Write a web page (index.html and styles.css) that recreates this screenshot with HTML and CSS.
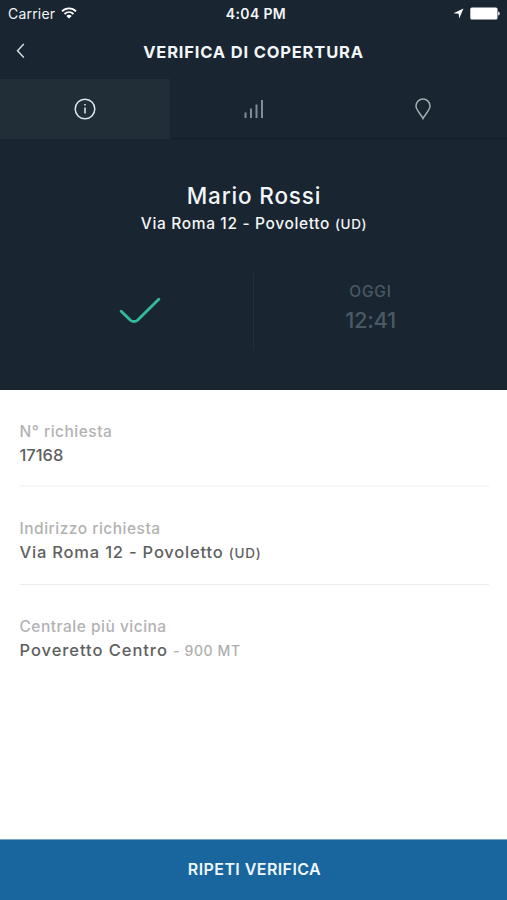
FILE: index.html
```html
<!DOCTYPE html>
<html lang="it">
<head>
<meta charset="utf-8">
<title>Verifica di copertura</title>
<link rel="stylesheet" href="styles.css">
</head>
<body>
<div class="app">
  <div class="status">
    <div class="carrier"><span>Carrier</span>
      <svg width="16" height="12" viewBox="0 0 16 12" fill="none" stroke="#fff" stroke-width="1.8"><path d="M1 4.4C5 .4 11 .4 15 4.4M3.5 7c2.6-2.5 6.4-2.5 9 0"/><path d="M8 11.6 5.3 8.9c1.6-1.4 3.8-1.4 5.4 0z" fill="#fff" stroke="none"/></svg>
    </div>
    <div class="clock">4:04 PM</div>
    <div class="power">
      <svg width="11" height="11" viewBox="0 0 11 11" fill="#fff"><path d="M10.5.5 6.2 10.5 5.7 5.7.5 5.2z"/></svg>
      <svg width="31" height="13" viewBox="0 0 31 13" fill="#fff"><rect x=".3" y=".5" width="27.2" height="12" rx="1.6"/><path d="M28.2 4.4c2 .6 2 3.6 0 4.2z"/></svg>
    </div>
  </div>
  <header class="header">
    <svg class="back" width="9" height="16" viewBox="0 0 9 16" fill="none" stroke="#dce3e8" stroke-width="1.4"><path d="M7.8 1 1.5 7.8l6.3 6.7"/></svg>
    <h1>VERIFICA DI COPERTURA</h1>
  </header>
  <nav class="tabs">
    <div class="tab active"><svg width="22" height="22" viewBox="0 0 22 22" fill="none" stroke="#dfe7ea" stroke-width="1.5"><circle cx="11" cy="11" r="9.8"/><path d="M11 9.5v6M11 6v1.6"/></svg></div>
    <div class="tab"><svg width="22" height="22" viewBox="0 0 22 22" fill="none" stroke="#838c94" stroke-width="2"><path d="M2.5 14.500v5.500M8 10.500V20M13.500 6.500V20M19 2v18"/></svg></div>
    <div class="tab"><svg width="16" height="22" viewBox="0 0 16 22" fill="none" stroke="#a4abb1" stroke-width="1.5"><path d="M8 20.400C6.500 17 1 12.200 1 8a7 6.900 0 0 1 14 0c0 4.200-5.500 9-7 12.400z"/></svg></div>
  </nav>
  <section class="hero">
    <div class="name">Mario Rossi</div>
    <div class="address">Via Roma 12 - Povoletto <small>(UD)</small></div>
    <div class="result">
      <div class="outcome"><svg width="42" height="28" viewBox="0 0 42 28" fill="none" stroke="#34b99b" stroke-width="2.900" stroke-linecap="round"><path d="m2.200 14.200 9 8.800q3.800 3.200 7.600 0L39.800 2.200"/></svg></div>
      <div class="when"><div class="day">OGGI</div><div class="time">12:41</div></div>
    </div>
  </section>
  <main class="details">
    <div class="row"><div class="label">N° richiesta</div><div class="value number">17168</div></div>
    <div class="row"><div class="label">Indirizzo richiesta</div><div class="value street">Via Roma 12 - Povoletto <small>(UD)</small></div></div>
    <div class="row"><div class="label">Centrale più vicina</div><div class="value">Poveretto Centro <small class="distance">- 900 MT</small></div></div>
  </main>
  <button class="retry">RIPETI VERIFICA</button>
</div>
</body>
</html>
```
FILE: styles.css
```css
* { box-sizing: border-box; }
body { margin: 0; font-family: Inter, "Liberation Sans", sans-serif; font-weight: 500; background: #fff; }
svg { display: block; flex: none; }
.app { display: flex; flex-direction: column; width: 507px; height: 900px; }
.status, .header, .tabs, .hero { background: #192530; color: #f3f6f8; }
.status { height: 28px; display: grid; grid-template-columns: 1fr auto 1fr; align-items: center; padding: 0 7px 0 8px; font-size: 14px; line-height: 28px; }
.carrier { display: flex; align-items: center; gap: 6px; font-weight: 400; letter-spacing: .2px; }
.carrier svg { margin-top: -2px; }
.clock { font-weight: 600; letter-spacing: .35px; padding-left: 4px; }
.power { display: flex; align-items: center; justify-content: flex-end; gap: 6px; margin-right: -1px; }
.power svg { margin-top: -1px; }
.header { height: 51px; display: grid; grid-template-columns: 40px 1fr 40px; align-items: center; }
.back { margin: -5px 0 0 16px; }
h1 { margin: -3px 0 0; font-size: 16.5px; line-height: 20px; font-weight: 700; letter-spacing: .83px; text-align: center; white-space: nowrap; }
.tabs { height: 60px; display: grid; grid-template-columns: 170px 168px 169px; border-bottom: 1px solid #121d26; }
.tab { display: flex; align-items: center; justify-content: center; }
.active { background: #212e38; height: 60px; }
.hero { height: 251px; padding-top: 42px; text-align: center; }
.name { height: 30px; font-size: 22.5px; line-height: 30px; letter-spacing: .85px; padding-left: 1px; }
.address { height: 25px; font-size: 15.5px; line-height: 25px; letter-spacing: .65px; padding-left: 1px; }
small { font-size: 13.5px; }
.result { margin-top: 37px; height: 77px; display: grid; grid-template-columns: 254px 1fr; }
.outcome { border-right: 1px solid #24313b; padding: 24px 0 0 119px; }
.when { padding: 8px 20px 0 0; color: #4c5964; }
.day { font-size: 15.5px; line-height: 22px; letter-spacing: .8px; }
.time { font-size: 22px; line-height: 34px; letter-spacing: -.4px; }
.details { flex: 1; padding: 0 18px 0 19.5px; }
.row { height: 97.5px; padding-top: 30px; border-bottom: 1px solid #ececec; }
.row:first-child { height: 97px; border-bottom: 2px solid #f5f5f5; }
.row:last-child { border: 0; }
.label { font-size: 15.5px; line-height: 24px; letter-spacing: .5px; color: #b2b2b2; }
.value { font-size: 16.5px; line-height: 24px; letter-spacing: .95px; color: #606060; margin-top: -1px; }
.number { letter-spacing: 0; }
.street { letter-spacing: .8px; }
.distance { color: #aeaeae; font-size: 14px; letter-spacing: .6px; }
.retry { height: 61px; border: 0; border-top: 1px solid #7aa5c4; padding: 0 0 3px 2px; background: #19669e; color: #eff7fc; font: 600 16px/56px Inter, "Liberation Sans", sans-serif; letter-spacing: .43px; }
```
